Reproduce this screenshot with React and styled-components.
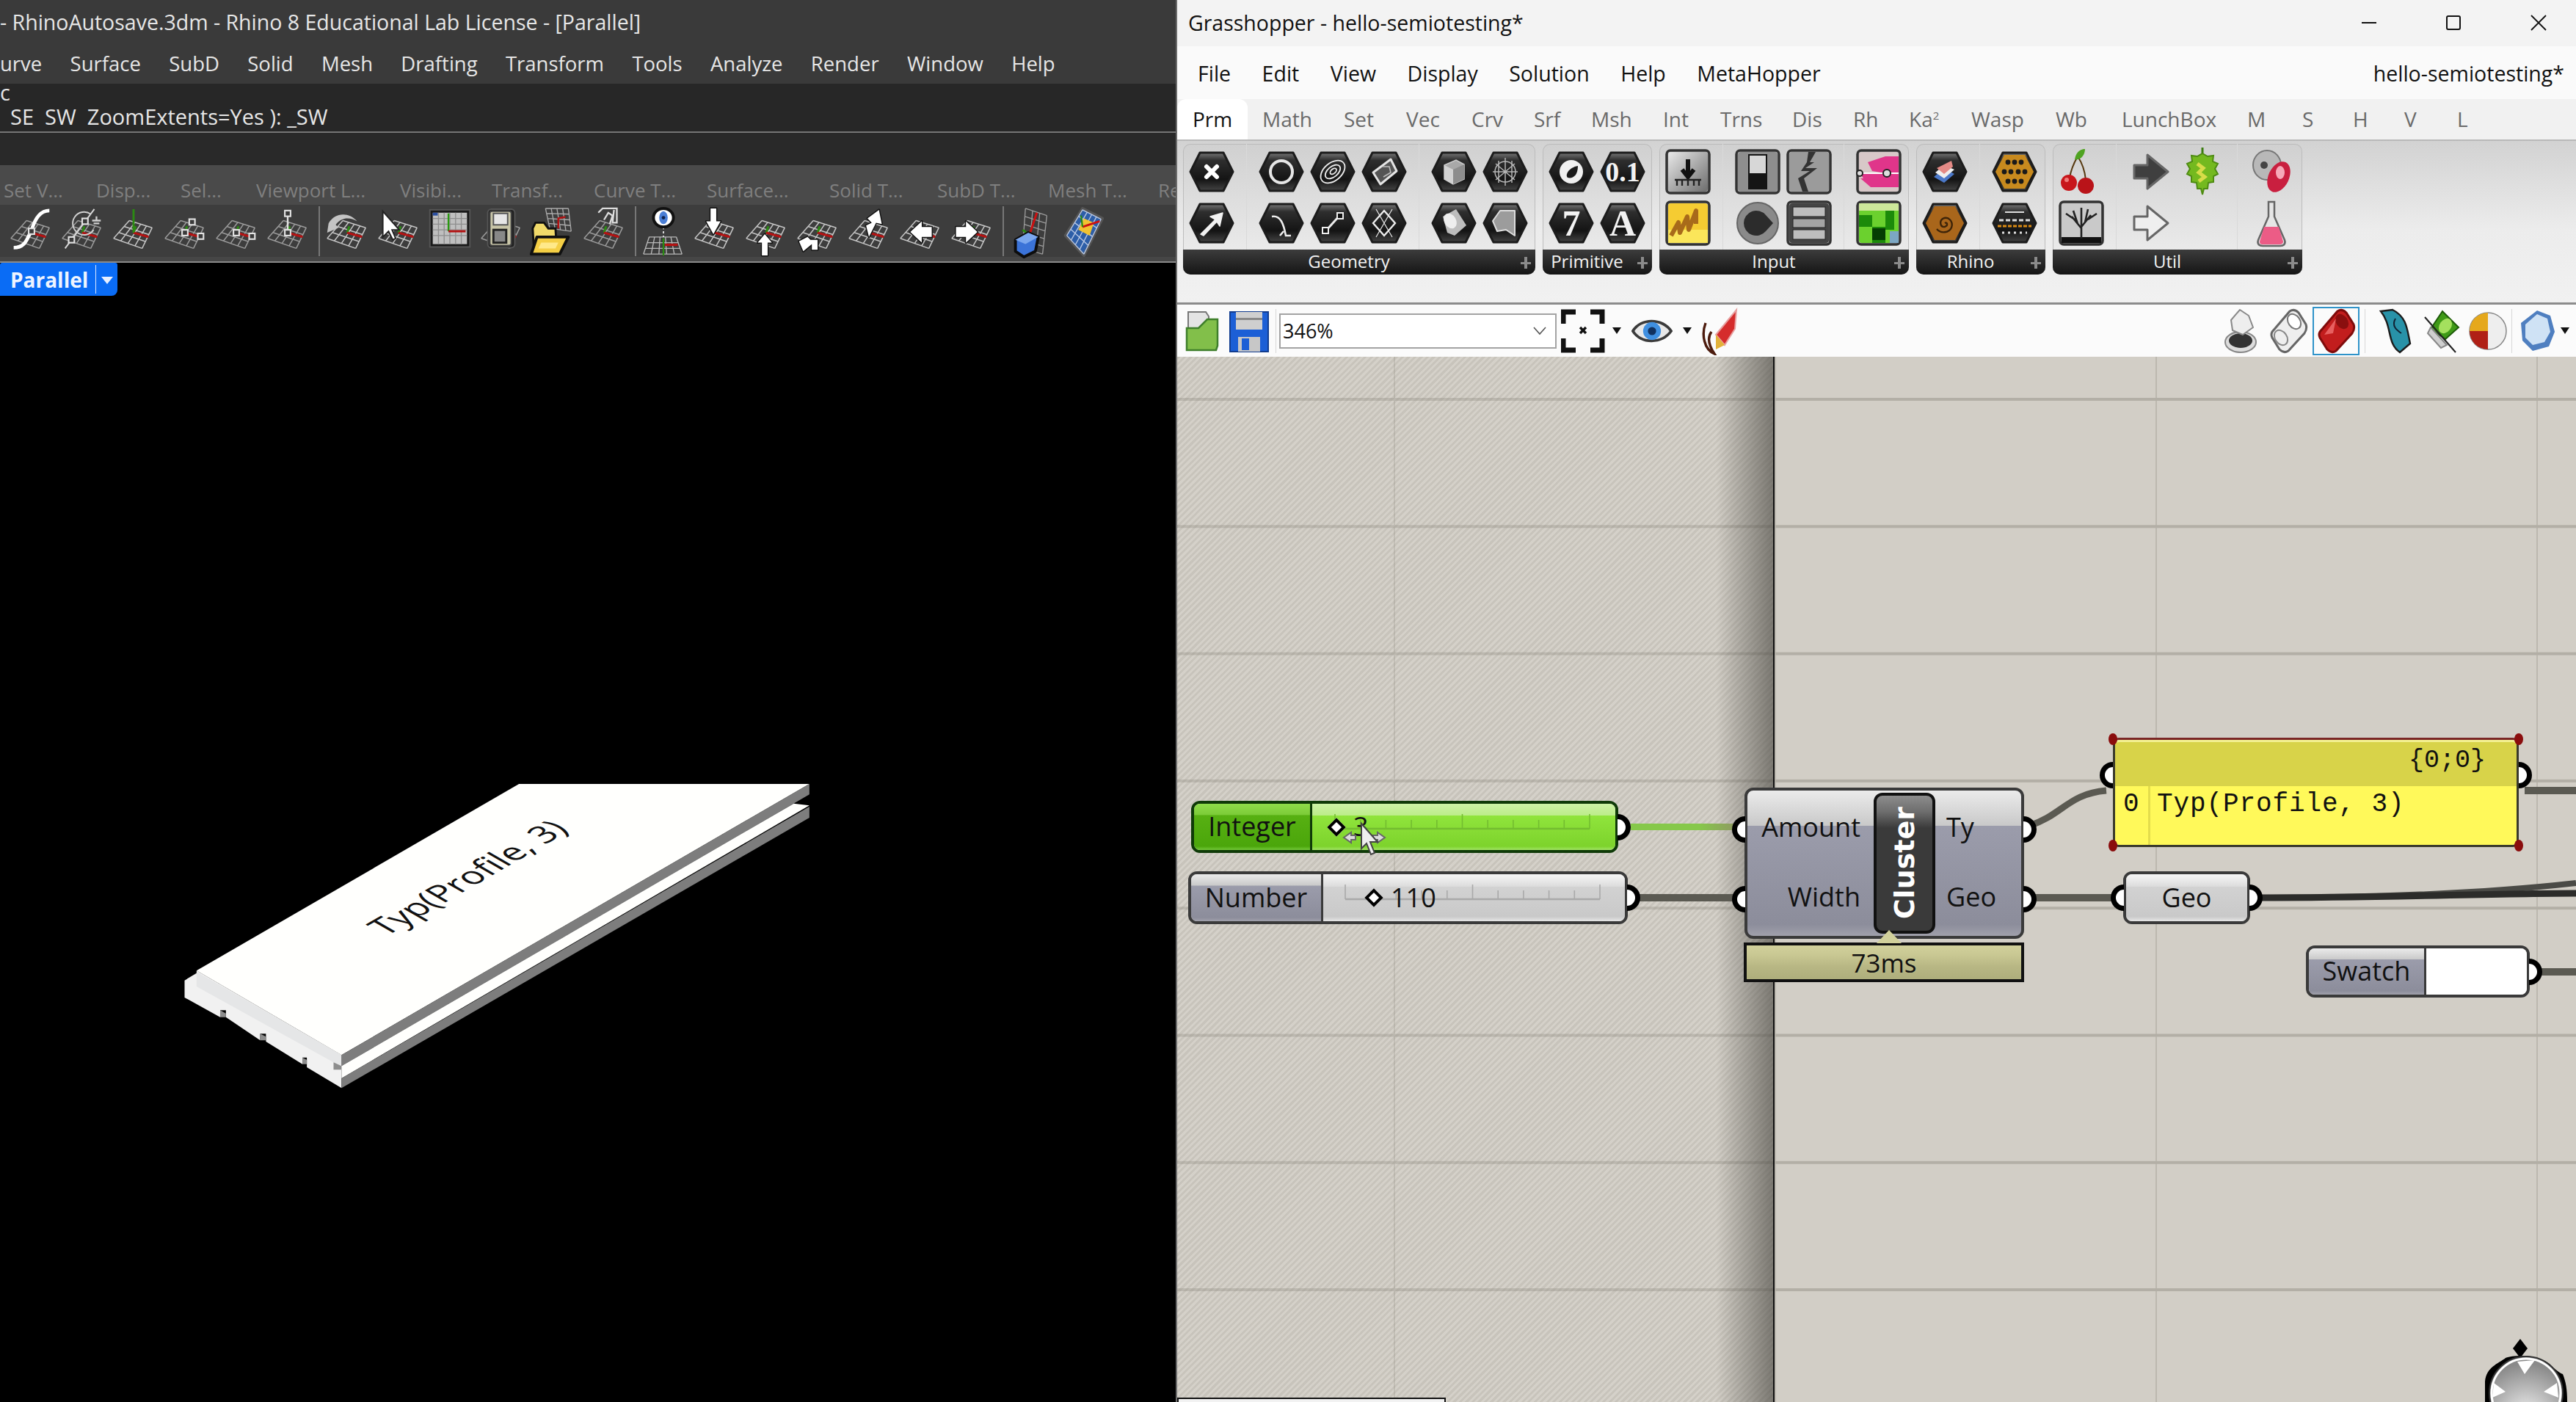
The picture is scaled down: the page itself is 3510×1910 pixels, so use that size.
import React from "react";
import styled, { createGlobalStyle } from "styled-components";

const UI = `"Open Sans", "Noto Sans", sans-serif`;

const Global = createGlobalStyle`
  html, body { margin: 0; padding: 0; background: #000; }
  * { box-sizing: border-box; }
`;

const Page = styled.div`
  display: grid;
  grid-template-columns: 1602px 1fr;
  width: 3510px;
  height: 1910px;
  overflow: hidden;
  font-family: ${UI};
`;

/* ---------- rhino side ---------- */

const Rhino = styled.section`
  display: flex;
  flex-direction: column;
  min-width: 0;
  background: #000;
  color: #e6e6e6;
  font-size: 27.5px;
`;

const RhinoTitle = styled.div`
  height: 64px;
  padding-top: 11px;
  background: #3a3a3a;
  font-size: 28.5px;
  white-space: nowrap;
`;

const RhinoMenu = styled.nav`
  display: flex;
  gap: 38.3px;
  height: 50px;
  padding-top: 4px;
  background: #3a3a3a;
  white-space: nowrap;
`;

const CommandHistory = styled.div`
  display: flex;
  flex-direction: column;
  height: 67px;
  line-height: 30px;
  background: #272727;
  border-bottom: 2px solid #767676;
  font-size: 29px;
  white-space: nowrap;
`;

const CommandLine = styled.div`
  padding-left: ${(p) => p.$indent || 0}px;
  line-height: ${(p) => p.$lh || 24}px;
`;

const CommandPrompt = styled.div`
  height: 44px;
  background: #292929;
`;

const RhinoTabs = styled.div`
  display: flex;
  align-items: center;
  height: 54px;
  padding-top: 14px;
  overflow: hidden;
  background: #4a4a4a;
  color: #7f7f7f;
  font-size: 26px;
  white-space: nowrap;
`;

const RhinoTab = styled.span`
  flex: none;
  width: ${(p) => p.$w}px;
  padding-left: 5px;
`;

const RhinoTools = styled.div`
  display: flex;
  height: 79px;
  padding-left: 7px;
  padding-top: 2px;
  background: linear-gradient(#3d3d3d 0 71px, #464646 71px);
  border-bottom: 2px solid #8a8a8a;
`;

const ToolSep = styled.i`
  flex: none;
  width: 2px;
  height: 68px;
  margin: 0 2px 0 7px;
  background: #777;
`;

const ToolCell = styled.div`
  flex: none;
  width: 70px;
  height: 72px;
  display: flex;
  justify-content: center;
`;

const Viewport = styled.div`
  position: relative;
  flex: 1;
  background: #000;
`;

const ViewTab = styled.div`
  position: absolute;
  left: 0;
  top: 0;
  display: flex;
  align-items: center;
  width: 160px;
  height: 45px;
  padding-left: 14px;
  border-radius: 3px 3px 8px 0;
  background: #0a6cf5;
  color: #eef4ff;
  font-size: 28px;
  font-weight: 700;
`;

const ViewTabArrow = styled.span`
  position: absolute;
  left: 130px;
  top: 3px;
  bottom: 3px;
  width: 30px;
  border-left: 1px solid #dbe8ff;
  &::after {
    content: "";
    position: absolute;
    left: 7px;
    top: 16px;
    border: 8px solid transparent;
    border-top: 10px solid #e8f0ff;
    border-bottom: 0;
  }
`;

const ModelSvg = styled.svg`
  display: block;
  width: 1602px;
  height: 1551px;
`;

/* ---------- grasshopper side ---------- */

const Hopper = styled.section`
  display: flex;
  flex-direction: column;
  min-width: 0;
  border-left: 2px solid #6b6b6b;
  background: #f2f2f2;
  color: #111;
  font-size: 28.5px;
`;

const HopperTitle = styled.div`
  display: flex;
  align-items: center;
  justify-content: space-between;
  height: 63px;
  padding: 0 0 2px 15px;
  background: #f3f3f3;
`;

const WinButtons = styled.div`
  display: flex;
  align-items: center;
  margin-right: 40px;
  gap: 95px;
`;

const HopperMenu = styled.nav`
  display: flex;
  align-items: center;
  gap: 42.5px;
  height: 72px;
  padding: 2px 16px 0 28px;
  background: #fafafa;
`;

const DocName = styled.span`
  margin-left: auto;
`;

const HopperTabs = styled.div`
  display: flex;
  align-items: flex-end;
  height: 55px;
  background: #f1f1f1;
  color: #6a6a6a;
  font-size: 28px;
`;

const HopperTab = styled.span`
  flex: none;
  width: ${(p) => p.$w}px;
  height: 55px;
  margin-right: ${(p) => (p.$active ? 20 : 0)}px;
  line-height: 55px;
  text-align: ${(p) => (p.$active ? "center" : "left")};
  color: ${(p) => (p.$active ? "#111" : "inherit")};
  background: ${(p) => (p.$active ? "#fff" : "transparent")};
  border-radius: ${(p) => (p.$active ? "12px 12px 0 0" : "0")};
  sup { font-size: 15px; line-height: 0; }
`;

const Ribbon = styled.div`
  display: flex;
  gap: 10px;
  height: 222px;
  padding: 4px 0 0 8px;
  background: linear-gradient(#d2d2d2, #ececec 55%, #f1f1f1);
  border-top: 2px solid #b9b9b9;
`;

const RibbonGroup = styled.div`
  display: flex;
  flex-direction: column;
  flex: none;
  width: ${(p) => p.$w}px;
  height: 178px;
  border-radius: 10px;
  background: linear-gradient(#d0d0d0, #f0f0f0);
  box-shadow: inset 0 0 0 1px #bcbcbc;
`;

const RibbonBody = styled.div`
  display: flex;
  flex: 1;
`;

const RibbonSection = styled.div`
  display: grid;
  grid-auto-flow: column;
  grid-template-rows: 70px 70px;
  grid-auto-columns: 70px;
  align-content: start;
  padding: 3px 12px 0;
  border-right: 1px solid #d9d9d9;
  &:first-child { padding-left: 4px; }
  &:last-child { padding-right: 4px; border-right: 0; }
`;

const RibbonFoot = styled.div`
  position: relative;
  height: 34px;
  padding-right: 28px;
  border-radius: 0 0 10px 10px;
  background: linear-gradient(#3c3c3c, #151515);
  color: #f2f2f2;
  font-size: 24px;
  line-height: 32px;
  text-align: center;
`;

const FootPin = styled.i`
  position: absolute;
  right: 6px;
  top: 10px;
  width: 14px;
  height: 16px;
  background: linear-gradient(#8b8b8b 0 0) center / 14px 3px no-repeat,
    linear-gradient(#8b8b8b 0 0) center / 4px 16px no-repeat;
`;

const CanvasBar = styled.div`
  display: flex;
  align-items: center;
  height: 74px;
  padding-left: 2px;
  background: #fbfbfb;
  border-top: 3px solid #8c8c8c;
`;

const BarCell = styled.div`
  flex: none;
  display: flex;
  align-items: center;
  justify-content: center;
  width: ${(p) => p.$w || 64}px;
  height: 66px;
  border: ${(p) => (p.$on ? "2px solid #2f93c9" : "0")};
`;

const BarSep = styled.i`
  flex: none;
  width: 1px;
  height: 60px;
  margin: 0 ${(p) => p.$m || 6}px 0 ${(p) => p.$l || 6}px;
  background: #d8d8d8;
`;

const Combo = styled.div`
  flex: none;
  display: flex;
  align-items: center;
  justify-content: space-between;
  width: 378px;
  height: 48px;
  padding: 0 12px 0 3px;
  border: 2px solid #a3a3a3;
  background: #fff;
  margin-right: 4px;
  font-size: 27px;
`;

const DropMark = styled.i`
  flex: none;
  width: 0;
  height: 0;
  margin: 0 ${(p) => p.$m || 0}px 0 ${(p) => p.$l || 0}px;
  border: 6px solid transparent;
  border-top: 9px solid #111;
  border-bottom: 0;
`;

const BarSpring = styled.div`
  flex: 1;
`;

const Canvas = styled.div`
  position: relative;
  flex: 1;
  display: flex;
  overflow: hidden;
  background-color: #d2cec6;
  background-image: linear-gradient(#b3afa6 4px, transparent 4px),
    linear-gradient(90deg, #bcb8af 2px, transparent 2px);
  background-size: 100% 173.3px, 519px 100%;
  background-position: 0 56px, 295px 0;
`;

const OffSheet = styled.div`
  position: relative;
  flex: none;
  width: 814px;
  border-right: 2px solid #111;
  background: repeating-linear-gradient(135deg, rgba(178, 174, 165, 0.32) 0 3px, rgba(222, 219, 212, 0.2) 3px 6px);
  &::after {
    content: "";
    position: absolute;
    top: 0;
    bottom: 0;
    right: 0;
    width: 78px;
    background: linear-gradient(90deg, rgba(70, 68, 62, 0), rgba(70, 68, 62, 0.62));
  }
`;

const Overlay = styled.svg`
  position: absolute;
  left: 0;
  top: 0;
  width: 1906px;
  height: 1424px;
  pointer-events: none;
`;

const Node = styled.div`
  position: absolute;
  left: ${(p) => p.$x}px;
  top: ${(p) => p.$y}px;
  width: ${(p) => p.$w}px;
  height: ${(p) => p.$h}px;
  display: flex;
  border: 4px solid ${(p) => p.$edge || "#3a3a3a"};
  border-radius: 12px;
  font-size: 36px;
  color: #111;
  white-space: nowrap;
`;

const greyFace = `linear-gradient(#ebebeb, #c9c9c9 24%, #9b9cab 24.5%, #8c8d9b 92%, #a0a0ab)`;
const lightFace = `linear-gradient(#f6f6f6, #dcdcdc 26%, #d2d2d2 27%, #c9c9c9 90%, #e6e6e6)`;

const Label = styled.div`
  flex: none;
  display: flex;
  align-items: center;
  justify-content: center;
  width: ${(p) => p.$w}px;
  padding-bottom: 2px;
  border-right: 3px solid ${(p) => p.$edge || "#3a3a3a"};
  border-radius: 8px 0 0 8px;
  background: ${(p) => p.$bg || greyFace};
`;

const Track = styled.div`
  position: relative;
  flex: 1;
  display: flex;
  align-items: center;
  padding-left: ${(p) => p.$pad}px;
  gap: 14px;
  border-radius: 0 8px 8px 0;
  background: ${(p) => p.$bg || lightFace};
`;

const Rail = styled.svg`
  position: absolute;
  left: ${(p) => p.$x}px;
  top: 12px;
  width: 350px;
  height: 28px;
`;

const Knob = styled.i`
  position: relative;
  flex: none;
  width: 18px;
  height: 18px;
  border: 4px solid #000;
  background: #fff;
  transform: rotate(45deg);
`;

const SliderValue = styled.span`
  position: relative;
  margin-top: -2px;
`;

const Grip = styled.i`
  position: absolute;
  top: 50%;
  width: 18px;
  height: 36px;
  margin-top: ${(p) => p.$dy || -18}px;
  background: #fff;
  border: 7px solid #000;
  ${(p) =>
    p.$in
      ? `left: -21px; border-right: 0; border-radius: 18px 0 0 18px;`
      : `right: -21px; border-left: 0; border-radius: 0 18px 18px 0;`}
`;

const ClusterNode = styled(Node)`
  justify-content: space-between;
  background: ${greyFace};
`;

const PortList = styled.div`
  display: flex;
  flex-direction: column;
  gap: 53px;
  padding: 29px ${(p) => (p.$right ? 0 : 14)}px 0 ${(p) => (p.$right ? 21 : 0)}px;
  width: ${(p) => p.$w}px;
  text-align: ${(p) => (p.$right ? "left" : "right")};
  line-height: 42px;
`;

const ClusterStrip = styled.div`
  position: absolute;
  left: 172px;
  top: 3px;
  bottom: 3px;
  width: 84px;
  display: flex;
  align-items: center;
  justify-content: center;
  border: 4px solid #111;
  border-radius: 12px;
  background: linear-gradient(#8d8d8d, #6d6d6d 12%, #3a3a3a 24%, #3a3a3a);
`;

const ClusterName = styled.span`
  writing-mode: vertical-rl;
  transform: rotate(180deg);
  color: #fff;
  font: 700 38px "DejaVu Sans", sans-serif;
`;

const Profiler = styled.div`
  position: absolute;
  left: ${(p) => p.$x}px;
  top: ${(p) => p.$y}px;
  width: ${(p) => p.$w}px;
  height: ${(p) => p.$h}px;
  display: flex;
  align-items: center;
  justify-content: center;
  border: 4px solid #111;
  font-size: 35px;
  background: linear-gradient(#d1d09b, #c8c792 30%, #b8b784 62%, #aeae7c);
  &::before {
    content: "";
    position: absolute;
    left: 177px;
    top: -21px;
    border: 17px solid transparent;
    border-top: 0;
    border-bottom: 18px solid #d1d09b;
  }
`;

const Panel = styled.div`
  position: absolute;
  left: ${(p) => p.$x}px;
  top: ${(p) => p.$y}px;
  width: ${(p) => p.$w}px;
  height: ${(p) => p.$h}px;
  display: flex;
  flex-direction: column;
  border: 3px solid #3a3a2c;
  border-top-color: #7a2626;
  border-radius: 8px;
  font-family: "Liberation Mono", monospace;
  font-size: 35px;
  color: #111;
`;

const PanelHead = styled.div`
  height: 63px;
  padding: 5px 42px 0 0;
  background: #d8d349;
  border-radius: 6px 6px 0 0;
  border-top: 3px solid #f3f090;
  text-align: right;
`;

const PanelBody = styled.div`
  flex: 1;
  display: flex;
  border-radius: 0 0 6px 6px;
  background: #fff95a;
  font-size: 36px;
  line-height: 50px;
  letter-spacing: 0.9px;
`;

const PanelIndex = styled.div`
  width: 48px;
  padding-left: 11px;
  border-right: 3px solid #e4dd4c;
`;

const PanelText = styled.div`
  padding-left: 9px;
`;

const PanelDot = styled.i`
  position: absolute;
  width: 12px;
  height: 16px;
  border-radius: 50%;
  background: #8a0d0d;
  ${(p) => (p.$right ? "right: -9px;" : "left: -9px;")}
  ${(p) => (p.$bottom ? "bottom: -9px;" : "top: -9px;")}
`;

const GeoFace = styled.div`
  flex: 1;
  display: flex;
  align-items: center;
  justify-content: center;
  padding-bottom: 2px;
  border-radius: 8px;
  background: ${lightFace};
`;

const SwatchColor = styled.div`
  flex: 1;
  border-radius: 0 8px 8px 0;
  background: #fff;
`;

const MiniPanel = styled.div`
  position: absolute;
  left: 0;
  bottom: -4px;
  width: 366px;
  height: 10px;
  border: 2px solid #111;
  background: #f2f2f2;
`;

const Gadget = styled.svg`
  position: absolute;
  left: ${(p) => p.$x}px;
  top: ${(p) => p.$y}px;
  width: ${(p) => p.$w}px;
  height: ${(p) => p.$h}px;
`;

/* ---------- rhino toolbar drawings ---------- */

const lerp = (a, b, t) => [a[0] + (b[0] - a[0]) * t, a[1] + (b[1] - a[1]) * t];

// perspective floor grid drawn between four corners
const gridPath = ([tl, tr, br, bl], cols = 4, rows = 3) => {
  let d = "";
  for (let i = 0; i <= cols; i++) {
    const p = lerp(tl, tr, i / cols);
    const q = lerp(bl, br, i / cols);
    d += `M${p[0]} ${p[1]}L${q[0]} ${q[1]}`;
  }
  for (let j = 0; j <= rows; j++) {
    const p = lerp(tl, bl, j / rows);
    const q = lerp(tr, br, j / rows);
    d += `M${p[0]} ${p[1]}L${q[0]} ${q[1]}`;
  }
  return d;
};

const FLOOR = [[30, 19], [62, 29], [48, 58], [8, 44]];

const Floor = ({ dim }) => (
  <g>
    <path d={gridPath(FLOOR)} fill="none" stroke={dim ? "#9a9a9a" : "#c4c4c4"} strokeWidth="1.6" />
    <path d="M36 36L39 27" stroke="#2b8a12" strokeWidth="3" />
    <path d="M36 36L57 42" stroke="#b31212" strokeWidth="3.2" />
  </g>
);

const Handle = ({ x, y }) => <rect x={x - 4} y={y - 4} width="8" height="8" fill="#3a3a3a" stroke="#e2e2e2" strokeWidth="2.2" />;

const BlockArrow = ({ d }) => <path d={d} fill="#fff" stroke="#111" strokeWidth="3" paintOrder="stroke" strokeLinejoin="round" />;

const toolIcons = [
  <><Floor dim /><path d="M12 57C30 57 31 42 37 33C42 15 50 5 62 5" fill="none" stroke="#fff" strokeWidth="5" /><Handle x={37} y={34} /></>,
  <><Floor dim /><path d="M12 58L53 3" stroke="#d8d8d8" strokeWidth="2" /><path d="M48 10A16 16 0 1 0 52 32" fill="none" stroke="#d0d0d0" strokeWidth="2" /><path d="M50 19H62M56 13V19M52 23H60" stroke="#d0d0d0" strokeWidth="2.4" /><Handle x={21} y={46} /><Handle x={40} y={20} /></>,
  <><Floor /><path d="M36 36V3" stroke="#2b8a12" strokeWidth="3" /></>,
  <><Floor dim /><Handle x={46} y={21} /><Handle x={36} y={36} /><Handle x={58} y={41} /></>,
  <><Floor dim /><Handle x={36} y={36} /><Handle x={58} y={41} /></>,
  <><Floor dim /><path d="M36 10V36" stroke="#e2e2e2" strokeWidth="2.4" /><Handle x={36} y={9} /><Handle x={36} y={36} /></>,
  <><Floor /><path d="M10 23C18 8 38 6 50 20C40 14 28 14 20 25L24 29L8 36Z" fill="#c4c4c4" /></>,
  <><Floor /><path d="M14 6V42L22 34L28 46L32 44L27 32L37 32Z" fill="#fff" stroke="#222" strokeWidth="2" /></>,
  <g>
    <rect x="8" y="4" width="56" height="52" fill="#1a1a1a" stroke="#555" strokeWidth="2" />
    <rect x="12" y="8" width="48" height="44" fill="#bfbfbf" />
    <path d="M12 16H60M12 24H60M12 32H60M12 40H60M20 8V52M28 8V52M36 8V52M44 8V52M52 8V52" stroke="#8e8e8e" strokeWidth="1.4" />
    <rect x="12" y="8" width="7" height="4" fill="#2a4ea0" />
    <path d="M34 9V34" stroke="#2b9a12" strokeWidth="2.4" />
    <path d="M34 34H58" stroke="#b31212" strokeWidth="3" />
  </g>,
  <><Floor dim /><rect x="17" y="3" width="38" height="54" rx="5" fill="#222" stroke="#555" strokeWidth="2" /><rect x="20" y="6" width="30" height="48" rx="3" fill="#c9c6a8" stroke="#444" strokeWidth="2" /><rect x="25" y="9" width="20" height="16" fill="#e6e6e6" stroke="#555" strokeWidth="2" /><rect x="25" y="32" width="18" height="18" fill="#888" stroke="#222" strokeWidth="3" /></>,
  <g>
    <path d={gridPath([[26, 2], [58, 2], [62, 34], [32, 30]], 4, 4)} fill="none" stroke="#aaa" strokeWidth="1.4" />
    <path d="M44 30V16L54 14" fill="none" stroke="#b31212" strokeWidth="2.6" />
    <path d="M8 30L12 22H24L30 30H40L42 62H10Z" fill="#f1da6a" stroke="#111" strokeWidth="3" />
    <path d="M14 42H58L46 66H6Z" fill="#f5cf45" stroke="#111" strokeWidth="4" strokeLinejoin="round" />
    <path d="M20 50H44L40 58H16Z" fill="#ffe98a" />
  </g>,
  <><Floor dim /><path d="M28 8L34 2H54V22H48L50 4M36 18L42 8L48 12L44 24" fill="none" stroke="#dcdcdc" strokeWidth="2.4" /></>,
  <g>
    <path d={gridPath([[16, 42], [54, 42], [62, 66], [8, 66]], 5, 3)} fill="none" stroke="#b8b8b8" strokeWidth="1.4" />
    <path d="M36 28V42" stroke="#ddd" strokeWidth="2" strokeDasharray="3 3" />
    <path d="M36 44V68" stroke="#2b8a12" strokeWidth="2.4" />
    <path d="M38 53H56" stroke="#b31212" strokeWidth="3.4" />
    <ellipse cx="36" cy="15" rx="14" ry="13" fill="#fff" stroke="#111" strokeWidth="4" />
    <ellipse cx="36" cy="15" rx="6" ry="9" fill="#4b7fd6" />
    <circle cx="36" cy="15" r="2.5" fill="#10224c" />
  </g>,
  <><Floor /><BlockArrow d="M30 2H38V20H44L34 38L24 20H30Z" /></>,
  <><Floor /><BlockArrow d="M30 68H38V50H44L34 38L24 50H30Z" /></>,
  <><Floor /><BlockArrow d="M16 62L10 48L22 42L26 46H36V60H28L28 52Z" /></>,
  <><Floor /><BlockArrow d="M36 42L32 26L40 22L34 16L50 4L54 24L46 22Z" /></>,
  <><Floor /><BlockArrow d="M52 28V42H38V50L22 35L38 20V28Z" /></>,
  <><Floor /><BlockArrow d="M14 28V42H28V50L44 35L28 20V28Z" /></>,
  <g>
    <path d={gridPath([[28, 2], [58, 12], [52, 66], [24, 58]], 3, 5)} fill="none" stroke="#9a9a9a" strokeWidth="1.4" />
    <path d="M34 38L44 8" stroke="#c11" strokeWidth="3" />
    <path d="M24 32L32 38" stroke="#2b8a12" strokeWidth="3" />
    <path d="M14 46L32 36L46 42L42 62L26 70L14 62Z" fill="#3b73d8" stroke="#0d0d0d" strokeWidth="4" strokeLinejoin="round" />
    <path d="M14 46L32 36L46 42L28 52Z" fill="#7ba7ee" />
  </g>,
  <g>
    <path d="M12 40L36 2L64 16L38 68Z" fill="#2d5ea8" stroke="#555" strokeWidth="4" strokeLinejoin="round" />
    <path d={gridPath([[36, 4], [62, 17], [38, 66], [14, 40]], 4, 4)} fill="none" stroke="#b9c8e4" strokeWidth="1.4" />
    <path d="M38 16L52 22L46 40L30 32Z" fill="#f1c232" />
    <path d="M36 28L60 20" stroke="#c11" strokeWidth="3" />
    <path d="M36 28L34 12" stroke="#2b8a12" strokeWidth="2.4" />
  </g>,
];

const ToolIcon = ({ index }) => (
  <ToolCell>
    <svg width="72" height="72" viewBox="0 0 72 72">{toolIcons[index]}</svg>
  </ToolCell>
);

/* ---------- grasshopper ribbon drawings ---------- */

const HexBase = ({ children, rim = "#1c1c1c" }) => (
  <svg width="70" height="70" viewBox="0 0 70 70">
    <defs>
      <linearGradient id="hexFace" x1="0" y1="0" x2="0" y2="1">
        <stop offset="0" stopColor="#777" />
        <stop offset="0.2" stopColor="#2e2e2e" />
        <stop offset="0.7" stopColor="#141414" />
        <stop offset="1" stopColor="#444" />
      </linearGradient>
    </defs>
    <polygon points="6,35 19,9 51,9 64,35 51,61 19,61" fill="url(#hexFace)" stroke={rim} strokeWidth="3" strokeLinejoin="round" />
    {children}
  </svg>
);

const HexText = ({ children, size = 36, x = 35, y = 48 }) => (
  <text x={x} y={y} fontFamily="Liberation Serif, serif" fontWeight="700" fontSize={size} fill="#f2f2f2" textAnchor="middle">
    {children}
  </text>
);

const W = { fill: "none", stroke: "#ededed", strokeWidth: 3 };

const hexIcons = {
  cross: <path d="M28 28L42 42M42 28L28 42" stroke="#fff" strokeWidth="6" strokeLinecap="round" />,
  ring: <circle cx="35" cy="35" r="15" fill="none" stroke="#e6e6e6" strokeWidth="4" />,
  swirl: <g {...W} strokeWidth="1.8" transform="rotate(-40 35 35)"><ellipse cx="35" cy="35" rx="19" ry="12" /><ellipse cx="35" cy="35" rx="12" ry="7" /><ellipse cx="36" cy="35" rx="5" ry="3" /></g>,
  sheet: <g><path d="M20 36L44 18L52 34L30 52Z" fill="#555" stroke="#e4e4e4" strokeWidth="3" strokeLinejoin="round" /><path d="M33 28L42 28L44 36L34 42" fill="none" stroke="#bbb" strokeWidth="1.6" /></g>,
  box: <g><path d="M22 26L38 19L49 25V45L34 52L22 45Z" fill="#a8a8a8" stroke="#ccc" strokeWidth="1.5" /><path d="M22 26L34 32V52L22 45Z" fill="#d2d2d2" /><path d="M34 32L49 25V45L34 52Z" fill="#8d8d8d" /></g>,
  mesh: <g stroke="#b5b5b5" strokeWidth="1.5" fill="none"><path d="M22 24L48 46M48 24L22 46M35 16V54M18 35H52M26 20L26 50M44 20L44 50" /><circle cx="35" cy="35" r="14" /></g>,
  arrow: <path d="M20 50L40 30L33 26L50 21L46 39L42 33L24 52Z" fill="#f2f2f2" stroke="#f2f2f2" strokeWidth="1.5" strokeLinejoin="round" />,
  arc: <path d="M22 26C34 24 38 36 41 52H48M38 46L33 52" {...W} strokeWidth="2.6" />,
  segment: <g><path d="M26 45L44 25" {...W} /><rect x="21" y="41" width="8" height="8" fill="#111" stroke="#eee" strokeWidth="2" /><rect x="41" y="21" width="8" height="8" fill="#111" stroke="#eee" strokeWidth="2" /></g>,
  kite: <g {...W} strokeWidth="2.4"><path d="M35 18L50 35L35 52L20 35Z" /><path d="M24 16L46 54M46 16L24 54" strokeWidth="1.2" /></g>,
  tube: <g><path d="M20 26L38 16L52 38L36 52L26 48Z" fill="#bdbdbd" /><ellipse cx="30" cy="32" rx="8" ry="11" fill="#eee" transform="rotate(-30 30 32)" /></g>,
  patch: <path d="M28 18H48V52L36 44L24 46L18 32Z" fill="#9c9c9c" stroke="#ddd" strokeWidth="2" strokeLinejoin="round" />,
  bool: <g><circle cx="35" cy="35" r="16" fill="#f0f0f0" /><path d="M44 27C44 41 36 45 30 43C26 39 32 29 44 27Z" fill="#1b1b1b" /></g>,
  num: <HexText size={38} y={48}>0.1</HexText>,
  int: <HexText size={50} y={52}>7</HexText>,
  txt: <HexText size={50} y={52}>A</HexText>,
  layers: <g><path d="M20 42L34 50L48 38L34 30Z" fill="#4b78c8" /><path d="M22 36L34 44L48 32L34 26Z" fill="#eee" /><path d="M24 30L44 20L46 28L34 38Z" fill="#e48a86" /></g>,
  comb: <g><polygon points="9,35 21,12 49,12 61,35 49,58 21,58" fill="#c88a1e" /><g fill="#1a1a1a"><circle cx="26" cy="22" r="3.4" /><circle cx="35" cy="22" r="3.4" /><circle cx="44" cy="22" r="3.4" /><circle cx="21" cy="35" r="3.4" /><circle cx="30" cy="35" r="3.4" /><circle cx="40" cy="35" r="3.4" /><circle cx="49" cy="35" r="3.4" /><circle cx="26" cy="48" r="3.4" /><circle cx="35" cy="48" r="3.4" /><circle cx="44" cy="48" r="3.4" /></g></g>,
  coil: <g><polygon points="9,35 21,12 49,12 61,35 49,58 21,58" fill="#a9661b" /><path d="M35 35C38 33 40 38 35 40C29 41 27 33 32 29C40 25 47 33 44 41C41 48 30 50 24 43" fill="none" stroke="#3d2409" strokeWidth="2.4" /></g>,
  bands: <g><path d="M22 20H48" stroke="#ddd" strokeWidth="2" /><path d="M14 31H56" stroke="#ddd" strokeWidth="3" strokeDasharray="6 3" /><path d="M12 39H58" stroke="#d98a14" strokeWidth="3" strokeDasharray="5 2" /><path d="M18 48H52" stroke="#ddd" strokeWidth="3" strokeDasharray="3 5" /></g>,
};

const SquareBase = ({ children, fill = "#bdbdbd" }) => (
  <svg width="70" height="70" viewBox="0 0 70 70">
    <rect x="6" y="6" width="58" height="58" rx="5" fill={fill} stroke="#333" strokeWidth="3.5" />
    {children}
  </svg>
);

const squareIcons = {
  param: <g><defs><linearGradient id="paramFace" x1="0" y1="0" x2="1" y2="1"><stop offset="0" stopColor="#e9e9e9" /><stop offset="1" stopColor="#6d6d6d" /></linearGradient></defs><rect x="8" y="8" width="54" height="54" rx="4" fill="url(#paramFace)" /><path d="M35 18V38M27 32L35 42L43 32" stroke="#111" strokeWidth="6" fill="none" /><path d="M17 46H53M20 46V54M27 46V54M35 46V54M43 46V54M50 46V54" stroke="#222" strokeWidth="2.4" /></g>,
  toggle: <g><rect x="8" y="8" width="54" height="54" rx="4" fill="#8e8e8e" /><rect x="22" y="11" width="26" height="48" fill="#151515" /><rect x="24" y="13" width="22" height="24" fill="#d7d7d7" /></g>,
  bolt: <g><rect x="8" y="8" width="54" height="54" rx="4" fill="#9b9b9b" /><path d="M34 8L44 8L36 22H42L30 30H46L28 44L34 62H26L20 44L36 34L24 34L32 22Z" fill="#333" /></g>,
  graph: <g><rect x="8" y="8" width="54" height="54" rx="4" fill="#d8c8c8" /><path d="M20 22L44 14H62V44H14L10 38H50L26 34Z" fill="#e0358a" /><path d="M10 44H62V56H24Z" fill="#e0358a" /><path d="M8 37H62" stroke="#fff" strokeWidth="2" /><circle cx="46" cy="37" r="5" fill="#ddd" stroke="#222" strokeWidth="2" /><circle cx="9" cy="37" r="4" fill="#ddd" stroke="#222" strokeWidth="2" /></g>,
  scribble: <g><rect x="8" y="8" width="54" height="54" rx="4" fill="#f5cc32" /><rect x="8" y="44" width="54" height="18" fill="#fbe65a" /><path d="M12 52L22 34L24 48L34 26L36 44L46 18L46 36" fill="none" stroke="#a86a1a" strokeWidth="6" strokeLinejoin="round" /></g>,
  list: <g><rect x="8" y="8" width="54" height="54" rx="4" fill="#444" /><rect x="13" y="13" width="44" height="13" fill="#bdbdbd" stroke="#222" /><rect x="13" y="29" width="44" height="12" fill="#a4a4a4" stroke="#222" /><rect x="13" y="44" width="44" height="13" fill="#bdbdbd" stroke="#222" /></g>,
  pixels: <g><rect x="8" y="8" width="54" height="54" rx="4" fill="#6bd12e" /><path d="M8 24H26V40H8ZM26 40H44V62H26ZM44 18H56V44H44Z" fill="#1c8a0a" /><rect x="26" y="42" width="18" height="16" fill="#053d03" /><path d="M8 8H62V18H8Z" fill="#cde79a" /><rect x="50" y="46" width="12" height="16" fill="#7ca7c4" /></g>,
  tree: <g><rect x="8" y="8" width="54" height="54" rx="4" fill="#c9c9c9" /><rect x="8" y="54" width="54" height="8" fill="#111" /><path d="M35 56V34M35 42L22 26M35 40L48 24M30 36L24 18M40 34L44 16M35 34V14M26 30L14 22M44 30L56 22" stroke="#222" strokeWidth="2.6" fill="none" /></g>,
};

const Dial = () => (
  <svg width="70" height="70" viewBox="0 0 70 70">
    <circle cx="35" cy="35" r="28" fill="#8a8a8a" stroke="#666" strokeWidth="2" />
    <path d="M16 35A17 17 0 0 1 46 24L56 35L46 46A17 17 0 0 1 16 35Z" fill="#2c2c2c" />
  </svg>
);

const Cherry = () => (
  <svg width="70" height="70" viewBox="0 0 70 70">
    <path d="M30 14C22 28 20 36 19 44M30 14C38 26 40 36 41 46" fill="none" stroke="#56380f" strokeWidth="2" />
    <path d="M26 18C28 6 36 4 40 4C40 12 34 20 26 18Z" fill="#4fa321" />
    <circle cx="18" cy="50" r="11" fill="#c8161b" />
    <circle cx="41" cy="54" r="11" fill="#b91319" />
    <circle cx="15" cy="46" r="3" fill="#f07a7a" />
  </svg>
);

const BigArrow = ({ fill }) => (
  <svg width="70" height="70" viewBox="0 0 70 70">
    <path d="M12 26H30V12L58 35L30 58V44H12Z" fill={fill} stroke="#666" strokeWidth="3" strokeLinejoin="round" />
  </svg>
);

const Hop = () => (
  <svg width="70" height="70" viewBox="0 0 70 70">
    <path d="M35 2V14" stroke="#3c7d12" strokeWidth="3" />
    <path d="M35 10L42 14L50 13L49 21L56 24L52 31L56 38L50 41L50 49L43 50L42 58L37 58L35 66L33 58L28 58L27 50L20 49L20 41L14 38L18 31L14 24L21 21L20 13L28 14Z" fill="#74b91f" stroke="#4e8b12" strokeWidth="2" />
    <path d="M28 24L36 30L30 36L38 42L30 48" fill="none" stroke="#d7dc48" strokeWidth="5" />
  </svg>
);

const Capsule = () => (
  <svg width="70" height="70" viewBox="0 0 70 70">
    <ellipse cx="28" cy="26" rx="19" ry="20" fill="#b8b8b8" stroke="#777" strokeWidth="2" />
    <circle cx="24" cy="26" r="5" fill="#444" />
    <ellipse cx="44" cy="42" rx="14" ry="22" transform="rotate(25 44 42)" fill="#c91f3f" />
    <ellipse cx="46" cy="36" rx="6" ry="9" fill="#f6a9b8" />
  </svg>
);

const Flask = () => (
  <svg width="70" height="70" viewBox="0 0 70 70">
    <path d="M30 6H38V26L52 58C54 64 50 66 46 66H22C18 66 14 64 16 58L30 26Z" fill="#e6e6e6" stroke="#666" strokeWidth="2.5" />
    <path d="M24 40H44L50 60C50 64 46 64 44 64H24C20 64 18 64 18 60Z" fill="#ec5c86" />
  </svg>
);

const Hex = ({ k }) => <HexBase>{hexIcons[k]}</HexBase>;
const Sq = ({ k }) => <SquareBase>{squareIcons[k]}</SquareBase>;

const ribbon = [
  { name: "Geometry", w: 480, sections: [[<Hex k="cross" />, <Hex k="arrow" />], [<Hex k="ring" />, <Hex k="arc" />, <Hex k="swirl" />, <Hex k="segment" />, <Hex k="sheet" />, <Hex k="kite" />], [<Hex k="box" />, <Hex k="tube" />, <Hex k="mesh" />, <Hex k="patch" />]] },
  { name: "Primitive", w: 149, sections: [[<Hex k="bool" />, <Hex k="int" />, <Hex k="num" />, <Hex k="txt" />]] },
  { name: "Input", w: 340, sections: [[<Sq k="param" />, <Sq k="scribble" />], [<Sq k="toggle" />, <Dial />, <Sq k="bolt" />, <Sq k="list" />], [<Sq k="graph" />, <Sq k="pixels" />]] },
  { name: "Rhino", w: 176, sections: [[<Hex k="layers" />, <Hex k="coil" />], [<Hex k="comb" />, <Hex k="bands" />]] },
  { name: "Util", w: 340, sections: [[<Cherry />, <Sq k="tree" />], [<BigArrow fill="#3f3f3f" />, <BigArrow fill="#efefef" />, <Hop />, <i />], [<Capsule />, <Flask />]] },
];

const tabs = [
  ["Prm", 96], ["Math", 111], ["Set", 85], ["Vec", 89], ["Crv", 85], ["Srf", 78], ["Msh", 98], ["Int", 78], ["Trns", 98], ["Dis", 83],
  ["Rh", 76], ["Ka", 85], ["Wasp", 115], ["Wb", 90], ["LunchBox", 171], ["M", 75], ["S", 69], ["H", 70], ["V", 72], ["L", 40],
];

const rhinoTabs = [
  ["Set V...", 126], ["Disp...", 115], ["Sel...", 103], ["Viewport L...", 196], ["Visibi...", 125], ["Transf...", 139], ["Curve T...", 154],
  ["Surface...", 167], ["Solid T...", 147], ["SubD T...", 151], ["Mesh T...", 150], ["Re", 40],
];

const SliderRail = ({ color, x }) => {
  const ticks = [0, 1, 2, 3, 4, 5, 6, 7, 8, 9, 10];
  return (
    <Rail $x={x} viewBox="0 0 350 28">
      <path d="M1 22H348" stroke={color} strokeWidth="2.5" />
      {ticks.map((t) => (
        <path key={t} d={`M${1 + t * 34.7} 22V${t % 5 === 0 ? 2 : 10}`} stroke={color} strokeWidth="1.6" />
      ))}
    </Rail>
  );
};

/* ---------- canvas bar drawings ---------- */

const Folder = () => (
  <svg width="50" height="60" viewBox="0 0 50 60">
    <path d="M6 4H30L34 10V30H6Z" fill="#e4e4e4" stroke="#777" strokeWidth="2" />
    <path d="M4 56V26L20 26L32 14H46V50L44 56Z" fill="#82bf4a" stroke="#3f7f2b" strokeWidth="2.5" />
  </svg>
);

const Floppy = () => (
  <svg width="56" height="60" viewBox="0 0 56 60">
    <path d="M2 4H54V58H2Z" fill="#1c5fd6" stroke="#123d90" strokeWidth="2" />
    <rect x="10" y="4" width="36" height="24" fill="#cfcfcf" />
    <rect x="10" y="12" width="36" height="3" fill="#888" />
    <rect x="13" y="38" width="30" height="20" fill="#c7c7c7" />
    <rect x="18" y="40" width="10" height="16" fill="#1c5fd6" />
  </svg>
);

const FrameIcon = () => (
  <svg width="60" height="60" viewBox="0 0 60 60">
    <path d="M3 20V4H20M40 4H56V20M56 40V56H40M20 56H3V40" fill="none" stroke="#111" strokeWidth="7" />
    <path d="M26 25L34 33M34 25L26 33" stroke="#111" strokeWidth="3.4" />
  </svg>
);

const EyeIcon = () => (
  <svg width="56" height="50" viewBox="0 0 60 50">
    <path d="M2 25C14 6 44 6 58 25C44 44 14 44 2 25Z" fill="#e8e8e8" stroke="#3b3b3b" strokeWidth="4" />
    <circle cx="30" cy="25" r="13" fill="#3f8fe0" />
    <circle cx="30" cy="25" r="6" fill="#10305e" />
  </svg>
);

const PenIcon = () => (
  <svg width="60" height="66" viewBox="0 0 60 66">
    <path d="M22 38L50 4L48 30L34 52Z" fill="#d52c2c" stroke="#e7a0a0" strokeWidth="2" />
    <path d="M22 38L34 52L22 58Z" fill="#e3b23a" />
    <path d="M8 22C2 38 6 58 20 64C12 52 10 42 16 34" fill="none" stroke="#4d1c0e" strokeWidth="3.4" />
  </svg>
);

const MeshPreview = ({ a, b, c }) => (
  <svg width="50" height="62" viewBox="0 0 50 62">
    <ellipse cx="25" cy="46" rx="21" ry="14" fill="#ddd" stroke={c} strokeWidth="2" />
    <ellipse cx="25" cy="44" rx="16" ry="10" fill={b} />
    <path d="M12 16L24 2L36 10L42 26L28 36L14 30Z" fill={a} stroke={c} strokeWidth="2" strokeLinejoin="round" />
  </svg>
);

const Tube = ({ outline }) => (
  <svg width="56" height="62" viewBox="0 0 56 62">
    <path d="M6 32L30 4Q36 0 42 6L52 22Q54 28 50 34L28 58Q22 62 16 56L6 40Q4 36 6 32Z" fill={outline ? "#eee" : "#c21d1d"} stroke={outline ? "#666" : "#7f0b0b"} strokeWidth="3" />
    <ellipse cx="36" cy="18" rx="8" ry="11" transform="rotate(-35 36 18)" fill={outline ? "#fff" : "#8a0f0f"} stroke={outline ? "#777" : "none"} strokeWidth="2" />
    {outline ? <ellipse cx="18" cy="40" rx="8" ry="11" transform="rotate(-35 18 40)" fill="none" stroke="#888" strokeWidth="2" /> : <path d="M12 36L28 14L24 34Z" fill="#e76060" />}
  </svg>
);

const Saddle = () => (
  <svg width="56" height="62" viewBox="0 0 56 62">
    <path d="M8 4L24 2C44 12 44 30 48 48L34 60C16 48 24 24 8 4Z" fill="#2892a8" stroke="#1c1c1c" strokeWidth="2.4" />
    <path d="M28 14C22 24 30 30 36 34" fill="none" stroke="#123" strokeWidth="2" />
  </svg>
);

const SplitBall = () => (
  <svg width="56" height="62" viewBox="0 0 56 62">
    <path d="M12 28L28 4L50 26L32 42Z" fill="#3f9a17" stroke="#1d5a09" strokeWidth="2" />
    <ellipse cx="32" cy="24" rx="8" ry="11" transform="rotate(35 32 24)" fill="#a4e05e" />
    <path d="M8 34L26 54L34 50L12 26Z" fill="#cfcfcf" stroke="#888" strokeWidth="2" />
    <path d="M4 12L46 60" stroke="#222" strokeWidth="2" />
  </svg>
);

const Ball = () => (
  <svg width="56" height="62" viewBox="0 0 56 62">
    <circle cx="28" cy="31" r="25" fill="#eee" stroke="#888" strokeWidth="1.5" />
    <path d="M28 6A25 25 0 0 0 3 31H28Z" fill="#e5a81c" />
    <path d="M3 31A25 25 0 0 0 28 56V31Z" fill="#b02016" />
  </svg>
);

const Gem = () => (
  <svg width="56" height="62" viewBox="0 0 56 62">
    <polygon points="28,3 46,10 52,32 44,52 22,58 8,44 6,20" fill="#4f7fc0" />
    <polygon points="28,8 42,14 46,32 38,46 22,50 12,40 12,22" fill="#cfe2f5" />
  </svg>
);

export default function App() {
  return (
    <Page>
      <Global />
      <Rhino>
        <RhinoTitle>- RhinoAutosave.3dm - Rhino 8 Educational Lab License - [Parallel]</RhinoTitle>
        <RhinoMenu>
          {["urve", "Surface", "SubD", "Solid", "Mesh", "Drafting", "Transform", "Tools", "Analyze", "Render", "Window", "Help"].map((m) => (
            <span key={m}>{m}</span>
          ))}
        </RhinoMenu>
        <CommandHistory>
          <CommandLine>c</CommandLine>
          <CommandLine $indent={14} $lh={42}>SE&nbsp; SW&nbsp; ZoomExtents=Yes ): _SW</CommandLine>
        </CommandHistory>
        <CommandPrompt />
        <RhinoTabs>
          {rhinoTabs.map(([t, w]) => (
            <RhinoTab key={t} $w={w}>{t}</RhinoTab>
          ))}
        </RhinoTabs>
        <RhinoTools>
          {[0, 1, 2, 3, 4, 5].map((i) => <ToolIcon key={i} index={i} />)}
          <ToolSep />
          {[6, 7, 8, 9, 10, 11].map((i) => <ToolIcon key={i} index={i} />)}
          <ToolSep />
          {[12, 13, 14, 15, 16, 17, 18].map((i) => <ToolIcon key={i} index={i} />)}
          <ToolSep />
          {[19, 20].map((i) => <ToolIcon key={i} index={i} />)}
        </RhinoTools>
        <Viewport>
          <ViewTab>Parallel<ViewTabArrow /></ViewTab>
          <ModelSvg viewBox="0 0 1602 1551">
            <g transform="translate(200 681) scale(0.6059 0.3333)">
              <polygon points="85,890 112,860 112,850 438,1195 438,1330 360,1245 360,1205 350,1205 350,1232 268,1140 268,1108 255,1108 255,1135 178,1040 178,1012 165,1012 165,1040 85,960" fill="#f1f1f1" />
              <polygon points="112,855 438,1195 438,1240 420,1225 112,915" fill="#e5e6e7" />
              <polygon points="165,1012 178,1025 178,1040 165,1040" fill="#8d8d8d" />
              <polygon points="255,1108 268,1120 268,1135 255,1135" fill="#8d8d8d" />
              <polygon points="350,1205 360,1215 360,1232 350,1232" fill="#8d8d8d" />
              <polygon points="420,1225 438,1240 438,1255 420,1255" fill="#8d8d8d" />
              <polygon points="837,87 1490,87 438,1195 112,850" fill="#fffffd" />
              <polygon points="438,1195 1490,87 1490,130 438,1240" fill="#7d7d7d" />
              <polygon points="438,1240 1455,167 1490,175 438,1290" fill="#fffffd" />
              <polygon points="438,1290 1490,180 1490,225 438,1330" fill="#7d7d7d" />
            </g>
            <text transform="matrix(0.866 -0.5 0.866 0.5 526 918)" fontFamily="Open Sans, sans-serif" fontSize="45.5" fill="#111">Typ(Profile, 3)</text>
          </ModelSvg>
        </Viewport>
      </Rhino>

      <Hopper>
        <HopperTitle>
          <span>Grasshopper - hello-semiotesting*</span>
          <WinButtons>
            <svg width="20" height="20" viewBox="0 0 20 20"><path d="M0 10H20" stroke="#111" strokeWidth="2" /></svg>
            <svg width="20" height="20" viewBox="0 0 20 20"><rect x="1" y="1" width="18" height="18" rx="2" fill="none" stroke="#111" strokeWidth="2" /></svg>
            <svg width="22" height="22" viewBox="0 0 22 22"><path d="M1 1L21 21M21 1L1 21" stroke="#111" strokeWidth="1.8" /></svg>
          </WinButtons>
        </HopperTitle>
        <HopperMenu>
          {["File", "Edit", "View", "Display", "Solution", "Help", "MetaHopper"].map((m) => (
            <span key={m}>{m}</span>
          ))}
          <DocName>hello-semiotesting*</DocName>
        </HopperMenu>
        <HopperTabs>
          {tabs.map(([t, w], i) => (
            <HopperTab key={t} $w={w} $active={i === 0}>
              {t}{t === "Ka" ? <sup>2</sup> : null}
            </HopperTab>
          ))}
        </HopperTabs>
        <Ribbon>
          {ribbon.map((g) => (
            <RibbonGroup key={g.name} $w={g.w}>
              <RibbonBody>
                {g.sections.map((s, i) => (
                  <RibbonSection key={i}>
                    {s.map((icon, j) => <React.Fragment key={j}>{icon}</React.Fragment>)}
                  </RibbonSection>
                ))}
              </RibbonBody>
              <RibbonFoot>{g.name}<FootPin /></RibbonFoot>
            </RibbonGroup>
          ))}
        </Ribbon>
        <CanvasBar>
          <BarCell><Folder /></BarCell>
          <BarCell><Floppy /></BarCell>
          <BarSep $l={4} $m={4} />
          <Combo>
            <span>346%</span>
            <svg width="18" height="12" viewBox="0 0 18 12"><path d="M1 1L9 10L17 1" fill="none" stroke="#555" strokeWidth="1.6" /></svg>
          </Combo>
          <BarCell><FrameIcon /></BarCell>
          <DropMark $l={8} $m={10} />
          <BarCell><EyeIcon /></BarCell>
          <DropMark $l={10} $m={8} />
          <BarCell $w={66}><PenIcon /></BarCell>
          <BarSpring />
          <BarCell><MeshPreview a="#eee" b="#333" c="#888" /></BarCell>
          <BarCell $w={66}><Tube outline /></BarCell>
          <BarCell $w={64} $on><Tube /></BarCell>
          <BarSep $l={7} $m={9} />
          <BarCell><Saddle /></BarCell>
          <BarCell><SplitBall /></BarCell>
          <BarCell $w={60}><Ball /></BarCell>
          <BarSep $l={2} $m={4} />
          <BarCell $w={60}><Gem /></BarCell>
          <DropMark $l={2} $m={9} />
        </CanvasBar>
        <Canvas>
          <OffSheet />
          <Overlay viewBox="0 0 1906 1424">
            <defs>
              <linearGradient id="liveWire" x1="0" y1="0" x2="1" y2="0">
                <stop offset="0.65" stopColor="#86c84a" />
                <stop offset="1" stopColor="#8f9a62" />
              </linearGradient>
            </defs>
            <rect x="618" y="636" width="143" height="9" fill="url(#liveWire)" />
            <path d="M621 737H761" stroke="#5b5a52" strokeWidth="10" />
            <path d="M1161 639C1205 625 1215 595 1266 591" fill="none" stroke="#5b5a52" strokeWidth="9" />
            <path d="M1161 737H1280" stroke="#5b5a52" strokeWidth="10" />
            <path d="M1836 591H1906M1851 838H1906" stroke="#5b5a52" strokeWidth="10" />
            <path d="M1471 737C1650 737 1790 730 1906 717" fill="none" stroke="#4a4a46" strokeWidth="8" />
            <path d="M1471 737C1650 737 1790 731 1906 731" fill="none" stroke="#2c2c2a" strokeWidth="9" />
          </Overlay>

          <Node $x={19} $y={605} $w={582} $h={71} $edge="#0f3a08">
            <Label $w={161} $edge="#0f3a08" $bg="linear-gradient(#8fdc4a, #7ccb38 24%, #57b012 25%, #4ba60b 92%, #74c93a)">Integer</Label>
            <Track $pad={24} $bg="linear-gradient(#cdf3a6, #bcec8a 25%, #90e43c 26%, #7dd32c 92%, #a3e565)">
              <SliderRail color="#73bd30" x={30} />
              <Knob />
              <SliderValue>3</SliderValue>
            </Track>
            <Grip />
          </Node>

          <Node $x={15} $y={701} $w={599} $h={72}>
            <Label $w={180}>Number</Label>
            <Track $pad={60} $bg={lightFace}>
              <SliderRail color="#a9a9a9" x={29} />
              <Knob />
              <SliderValue>110</SliderValue>
            </Track>
            <Grip />
          </Node>

          <ClusterNode $x={773} $y={587} $w={381} $h={206}>
            <PortList $w={168}>
              <span>Amount</span>
              <span>Width</span>
            </PortList>
            <ClusterStrip><ClusterName>Cluster</ClusterName></ClusterStrip>
            <PortList $right $w={123}>
              <span>Ty</span>
              <span>Geo</span>
            </PortList>
            <Grip $in $dy={-64} />
            <Grip $in $dy={31} />
            <Grip $dy={-64} />
            <Grip $dy={31} />
          </ClusterNode>
          <Profiler $x={772} $y={798} $w={382} $h={54}>73ms</Profiler>

          <Panel $x={1275} $y={519} $w={553} $h={149}>
            <PanelHead>{"{0;0}"}</PanelHead>
            <PanelBody>
              <PanelIndex>0</PanelIndex>
              <PanelText>Typ(Profile, 3)</PanelText>
            </PanelBody>
            <PanelDot />
            <PanelDot $right />
            <PanelDot $bottom />
            <PanelDot $right $bottom />
            <Grip $in $dy={-42} />
            <Grip $dy={-42} />
          </Panel>

          <Node $x={1289} $y={701} $w={173} $h={72}>
            <GeoFace>Geo</GeoFace>
            <Grip $in />
            <Grip />
          </Node>

          <Node $x={1538} $y={802} $w={305} $h={71}>
            <Label $w={160}>Swatch</Label>
            <SwatchColor />
            <Grip />
          </Node>

          <Gadget $x={225} $y={628} $w={60} $h={56} viewBox="0 0 60 56">
            <path d="M2 27L12 20V24H18V30H12V34ZM58 27L48 20V24H42V30H48V34Z" fill="#ddd" stroke="#666" strokeWidth="2" />
            <path d="M26 8V42L33 35L39 50L44 48L38 33L48 33Z" fill="#eee" stroke="#444" strokeWidth="2" />
          </Gadget>

          <Gadget $x={1770} $y={1336} $w={136} $h={88} viewBox="0 0 136 88">
            <defs>
              <radialGradient id="navFace" cx="0.5" cy="0.8" r="0.7">
                <stop offset="0" stopColor="#eee" />
                <stop offset="1" stopColor="#8a8a8a" />
              </radialGradient>
            </defs>
            <path d="M60 2L70 15L60 28L50 15Z" fill="#000" />
            <path d="M12 60C14 40 30 36 40 28C52 24 80 22 100 36C104 40 112 48 118 50C122 60 124 70 124 88H12Z" fill="#000" />
            <circle cx="68" cy="76" r="50" fill="url(#navFace)" stroke="#333" strokeWidth="2" />
            <circle cx="68" cy="76" r="47" fill="none" stroke="#fff" strokeWidth="3" />
            <path d="M56 33L80 31L66 50ZM24 62L40 74L22 82ZM110 62L92 74L112 82Z" fill="#fff" />
          </Gadget>

          <MiniPanel />
        </Canvas>
      </Hopper>
    </Page>
  );
}
